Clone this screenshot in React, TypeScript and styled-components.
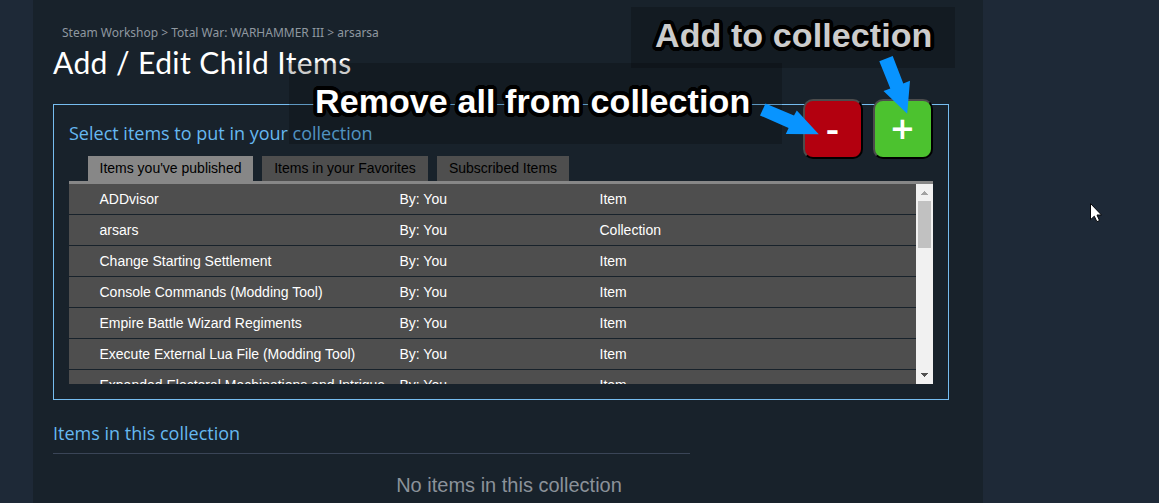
import React from "react";
import styled, { createGlobalStyle } from "styled-components";

const Global = createGlobalStyle`
  * { box-sizing: border-box; }
  body { margin: 0; background: #1e2937; overflow: hidden; font-family: "Liberation Sans", Arial, sans-serif; }
`;

const Page = styled.div`
  position: relative;
  width: 1159px;
  height: 503px;
  overflow: hidden;
  background: #1e2937;
`;

const Content = styled.main`
  width: 950px;
  height: 503px;
  margin-left: 33px;
  padding: 23px 34px 0 20px;
  background: #18222b;
`;

const Breadcrumbs = styled.nav`
  height: 20px;
  padding-left: 9px;
  font: 12px/20px "Noto Sans", sans-serif;
  color: #8f98a0;
  white-space: nowrap;
`;

const Title = styled.h1`
  height: 42px;
  margin: 0;
  font: 400 30px/39px Lato, sans-serif;
  letter-spacing: 0.42px;
  color: #fff;
  white-space: nowrap;
`;

const Picker = styled.section`
  width: 896px;
  height: 296px;
  margin-top: 19px;
  padding: 0 15px;
  border: 1px solid #76bdf0;
`;

const PickerHead = styled.div`
  display: flex;
  justify-content: space-between;
  height: 51px;
`;

const Heading = styled.h2<{ $top: number }>`
  height: 26px;
  margin: ${(p) => p.$top}px 0 0;
  font: 400 18px/26px "Open Sans", sans-serif;
  color: #66b8f0;
  white-space: nowrap;
`;

const Actions = styled.div`
  display: flex;
  gap: 10px;
  margin-top: -6px;
`;

const ActionButton = styled.button<{ $color: string }>`
  width: 60px;
  height: 60px;
  padding: 0 1px 3px 0;
  border: 2px solid;
  border-color: #4c4c4c #000 #000 #4c4c4c;
  border-radius: 10px;
  background: ${(p) => p.$color};
  color: #fff;
  font: 600 40px/50px "Open Sans", sans-serif;
`;

const Tabs = styled.div`
  display: flex;
  gap: 9px;
  padding-left: 19px;
`;

const Tab = styled.button<{ $width: number; $active?: boolean }>`
  width: ${(p) => p.$width}px;
  height: 25px;
  padding: 0 0 1px;
  border: 0;
  background: ${(p) => (p.$active ? "#878787" : "#4e4e4e")};
  color: #000;
  font: 14px/23px "Liberation Sans", Arial, sans-serif;
  white-space: nowrap;
`;

const ListFrame = styled.div`
  display: flex;
  width: 864px;
  height: 203px;
  border-top: 3px solid #878787;
`;

const Rows = styled.div`
  flex: 1;
  overflow: hidden;
`;

const Row = styled.div`
  display: grid;
  grid-template-columns: 300px 200px 1fr;
  height: 30px;
  margin-bottom: 1px;
  padding-left: 30.5px;
  background: #4e4e4e;
  color: #fff;
  font-size: 14px;
  line-height: 30px;
  white-space: nowrap;
`;

const Scrollbar = styled.div`
  display: flex;
  flex-direction: column;
  align-items: center;
  width: 17px;
  background: #f1f1f1;
`;

const Thumb = styled.div`
  width: 13px;
  height: 47px;
  margin-bottom: auto;
  background: #c1c1c1;
`;

const Divider = styled.div`
  width: 637px;
  height: 1px;
  margin-top: 7px;
  background: #3a4557;
`;

const Empty = styled.p`
  width: 912px;
  margin: 19px 0 0;
  font-size: 20px;
  line-height: 24px;
  text-align: center;
  color: #8b929a;
`;

// A ring of hard shadows gives the captions a round-cornered outline.
const outline = Array.from({ length: 24 }, (_, i) => {
  const angle = (i * Math.PI) / 12;
  return `${(Math.cos(angle) * 3.7).toFixed(2)}px ${(Math.sin(angle) * 3.7).toFixed(2)}px 0 #000`;
}).join(", ");

const Caption = styled.div<{ $x: number; $y: number; $w: number; $h: number; $pad: number; $color: string }>`
  position: absolute;
  left: ${(p) => p.$x}px;
  top: ${(p) => p.$y}px;
  width: ${(p) => p.$w}px;
  height: ${(p) => p.$h}px;
  padding-left: ${(p) => p.$pad}px;
  background: rgba(0, 0, 0, 0.2);
  color: ${(p) => p.$color};
  font: bold 34px/${(p) => p.$h - 4}px "Liberation Sans", Arial, sans-serif;
  letter-spacing: 0.1px;
  white-space: nowrap;
  text-shadow: ${outline};
`;

const Overlay = styled.svg`
  position: absolute;
  left: 0;
  top: 0;
  pointer-events: none;
`;

const items: [string, string][] = [
  ["ADDvisor", "Item"],
  ["arsars", "Collection"],
  ["Change Starting Settlement", "Item"],
  ["Console Commands (Modding Tool)", "Item"],
  ["Empire Battle Wizard Regiments", "Item"],
  ["Execute External Lua File (Modding Tool)", "Item"],
  ["Expanded Electoral Machinations and Intrigue", "Item"],
];

export default function App() {
  return (
    <Page>
      <Global />
      <Content>
        <Breadcrumbs>Steam Workshop &gt; Total War: WARHAMMER III &gt; arsarsa</Breadcrumbs>
        <Title>Add / Edit Child Items</Title>
        <Picker>
          <PickerHead>
            <Heading $top={15}>Select items to put in your collection</Heading>
            <Actions>
              <ActionButton $color="#b3000f">-</ActionButton>
              <ActionButton $color="#4cc22f">+</ActionButton>
            </Actions>
          </PickerHead>
          <Tabs>
            <Tab $width={165} $active>Items you've published</Tab>
            <Tab $width={166}>Items in your Favorites</Tab>
            <Tab $width={132}>Subscribed Items</Tab>
          </Tabs>
          <ListFrame>
            <Rows>
              {items.map(([name, kind]) => (
                <Row key={name}>
                  <span>{name}</span>
                  <span>By: You</span>
                  <span>{kind}</span>
                </Row>
              ))}
            </Rows>
            <Scrollbar>
              <svg width="17" height="17" shapeRendering="crispEdges"><path d="M5 11h7v-1h-1v-1h-1v-1h-1v-1h-1v1h-1v1h-1v1h-1z" fill="#a3a3a3" /></svg>
              <Thumb />
              <svg width="17" height="17" shapeRendering="crispEdges"><path d="M5 6h7v1h-1v1h-1v1h-1v1h-1v-1h-1v-1h-1v-1h-1z" fill="#505050" /></svg>
            </Scrollbar>
          </ListFrame>
        </Picker>
        <Heading $top={20}>Items in this collection</Heading>
        <Divider />
        <Empty>No items in this collection</Empty>
      </Content>
      <Caption $x={289} $y={63} $w={493} $h={81} $pad={26} $color="#fff">Remove all from collection</Caption>
      <Caption $x={631} $y={7} $w={324} $h={61} $pad={24} $color="#ccc">Add to collection</Caption>
      <Overlay width="1159" height="503">
        <g fill="#0894ff">
          <path d="M879.3 61.3 892.7 56l10.6 27.5 6.7-2.7-2.8 33L883.5 91l6.8-2.5z" />
          <path d="M765.5 103.5 794 115.5l2.8-5 22 23.7-33-.2 2.8-6-28.6-12.5z" />
        </g>
        <path d="M1090.5 203.5v16.2l3.8-3.5 2.6 5.5 2.6-1.2-2.5-5.5h4.5z" fill="#fff" stroke="#05060a" />
      </Overlay>
    </Page>
  );
}
